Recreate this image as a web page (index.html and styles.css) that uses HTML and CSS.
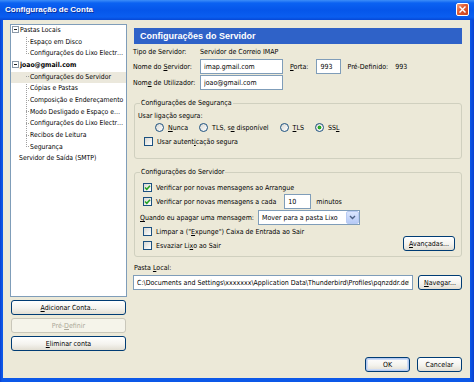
FILE: index.html
```html
<!DOCTYPE html>
<html lang="pt">
<head>
    <meta charset="UTF-8">
    <title>Configuração de Conta</title>
    <link rel="stylesheet" href="styles.css">
</head>
<body>

<div class="window">
    <div class="titlebar">
        <span class="title">Configuração de Conta</span>
        <span class="close-btn">
            <svg width="7" height="7" viewBox="0 0 7 7"><path d="M1 1L6 6M6 1L1 6" stroke="#fff" stroke-width="1.4" stroke-linecap="square"/></svg>
        </span>
    </div>

    <div class="client">
        <!-- arvore de contas -->
        <div class="sidebar">
            <div class="tree">
                <div class="tree-row parent"><span class="twisty"></span>Pastas Locais</div>
                <div class="children">
                    <div class="tree-row child">Espaço em Disco</div>
                    <div class="tree-row child">Configurações do Lixo Electrónico</div>
                </div>
                <div class="tree-row parent account"><span class="twisty"></span>joao@gmail.com</div>
                <div class="children">
                    <div class="tree-row child selected">Configurações do Servidor</div>
                    <div class="tree-row child">Cópias e Pastas</div>
                    <div class="tree-row child">Composição e Endereçamento</div>
                    <div class="tree-row child">Modo Desligado e Espaço em Disco</div>
                    <div class="tree-row child">Configurações do Lixo Electrónico</div>
                    <div class="tree-row child">Recibos de Leitura</div>
                    <div class="tree-row child">Segurança</div>
                </div>
                <div class="tree-row top">Servidor de Saída (SMTP)</div>
            </div>
            <div class="side-buttons">
                <button class="btn"><u>A</u>dicionar Conta...</button>
                <button class="btn" disabled>Pré-<u>D</u>efinir</button>
                <button class="btn"><u>E</u>liminar conta</button>
            </div>
        </div>

        <!-- pagina de configuracao -->
        <div class="main">
            <div class="page-header">Configurações do Servidor</div>

            <div class="info-grid">
                <span class="cell">Tipo de Servidor:</span>
                <span class="cell">Servidor de Correio IMAP</span>

                <label class="cell"><span>Nome do <u>S</u>ervidor:</span></label>
                <div class="cell">
                    <input class="textbox server-box" value="imap.gmail.com">
                    <label class="port-label"><u>P</u>orta:</label>
                    <input class="textbox port-box" value="993">
                    <span class="default-label">Pré-Definido:</span>
                    <span>993</span>
                </div>

                <label class="cell"><span>Nom<u>e</u> de Utilizador:</span></label>
                <div class="cell">
                    <input class="textbox server-box" value="joao@gmail.com">
                </div>
            </div>

            <fieldset class="group security">
                <legend>Configurações de Segurança</legend>
                <div class="line">Usar ligação segura:</div>
                <div class="radios">
                    <span class="opt"><span class="radio"></span><span><u>N</u>unca</span></span>
                    <span class="opt"><span class="radio"></span><span>TLS, s<u>e</u> disponível</span></span>
                    <span class="opt"><span class="radio"></span><span><u>T</u>LS</span></span>
                    <span class="opt"><span class="radio on"></span><span>SS<u>L</u></span></span>
                </div>
                <div class="opt check-line"><span class="check"></span><span>Usar autent<u>i</u>cação segura</span></div>
            </fieldset>

            <fieldset class="group server">
                <legend>Configurações do Servidor</legend>
                <div class="opt check-line first">
                    <span class="check on"><svg width="7" height="7" viewBox="0 0 7 7"><path d="M1 3.5L2.8 5.3L6 1.8" fill="none" stroke="#21a121" stroke-width="1.5"/></svg></span>
                    <span>Verificar por novas mensagens ao Arrangue</span>
                </div>
                <div class="opt check-line tall">
                    <span class="check on"><svg width="7" height="7" viewBox="0 0 7 7"><path d="M1 3.5L2.8 5.3L6 1.8" fill="none" stroke="#21a121" stroke-width="1.5"/></svg></span>
                    <span>Verificar por novas mensagens a cada</span>
                    <input class="textbox minutes-box" value="10">
                    <span class="minutes">minutos</span>
                </div>
                <div class="delete-line">
                    <label><u>Q</u>uando eu apagar uma mensagem:</label>
                    <div class="menulist">
                        <span class="value">Mover para a pasta Lixo</span>
                        <span class="drop"><svg width="7" height="5" viewBox="0 0 7 5"><path d="M1 1L3.5 3.5L6 1" fill="none" stroke="#4d6185" stroke-width="1.4"/></svg></span>
                    </div>
                </div>
                <div class="bottom-block">
                    <div class="checks">
                        <div class="opt check-line"><span class="check"></span><span>Limpar a ("<u>E</u>xpunge") Caixa de Entrada ao Sair</span></div>
                        <div class="opt check-line"><span class="check"></span><span>Esvaziar Li<u>x</u>o ao Sair</span></div>
                    </div>
                    <button class="btn advanced"><u>A</u>vançadas...</button>
                </div>
            </fieldset>

            <div class="local-label">Pasta <u>L</u>ocal:</div>
            <div class="local-line">
                <input class="textbox local-box" value="C:\Documents and Settings\xxxxxxx\Application Data\Thunderbird\Profiles\pqnzddr.default\Mail\Local Folders">
                <button class="btn browse"><u>N</u>avegar...</button>
            </div>

            <div class="dialog-buttons">
                <button class="btn default">OK</button>
                <button class="btn">Cancelar</button>
            </div>
        </div>
    </div>
</div>

</body>
</html>
```

FILE: styles.css
```css
* {
    box-sizing: border-box;
}
body {
    margin: 0;
    background: #fff;
}
.window {
    width: 474px;
    height: 382px;
    display: flex;
    flex-direction: column;
    background: linear-gradient(to right, #0a3fd0 0, #0c58e8 2px, #0c58e8 470px, #0a3fd0 474px);
    font-family: "DejaVu Sans Condensed", "Liberation Sans", sans-serif;
    font-size: 7px;
    line-height: 10px;
    color: #000;
}
.titlebar {
    height: 20px;
    display: flex;
    align-items: center;
    padding: 0 5px 0 5px;
    background: linear-gradient(to bottom, #3d8ef8 0%, #0b62f2 15%, #0556ea 50%, #0a5ef0 85%, #0648d6 100%);
}
.title {
    flex: 1;
    color: #fff;
    font-family: "Liberation Sans", sans-serif;
    font-size: 8px;
    font-weight: bold;
    text-shadow: 1px 1px 0 #0c2f9a;
}
.close-btn {
    width: 13px;
    height: 13px;
    border: 1px solid #fff;
    border-radius: 2px;
    background: linear-gradient(135deg, #f3a283 0%, #e35d34 40%, #c8401a 100%);
    display: flex;
    align-items: center;
    justify-content: center;
    margin-top: -1px;
}
.client {
    flex: 1;
    margin: 0 4px 4px 3px;
    background: #ece9d8;
    display: flex;
    gap: 6px;
    padding: 4px 8px 6px 7px;
}

/* arvore */
.sidebar {
    width: 117px;
    display: flex;
    flex-direction: column;
}
.tree {
    height: 273px;
    border: 1px solid #7f9db9;
    background: #fff;
    overflow: hidden;
    font-size: 6.8px;
}
.tree-row {
    height: 11.67px;
    line-height: 11.67px;
    white-space: nowrap;
    overflow: hidden;
    text-overflow: ellipsis;
}
.tree-row.parent {
    padding-left: 1px;
}
.tree-row.account {
    font-weight: bold;
}
.tree-row.top {
    padding-left: 8px;
}
.twisty {
    display: inline-block;
    width: 7px;
    height: 7px;
    margin-right: 1px;
    vertical-align: -1px;
    border: 1px solid #8c9aa8;
    background: linear-gradient(#222, #222) center / 3px 1px no-repeat, #fff;
}
.children {
    background-image: repeating-linear-gradient(to bottom, #a0a0a0 0 1px, transparent 1px 2px);
    background-size: 1px calc(100% - 6px);
    background-position: 15px 0;
    background-repeat: no-repeat;
}
.tree-row.child {
    padding-left: 15px;
}
.tree-row.child::before {
    content: '';
    display: inline-block;
    width: 3px;
    vertical-align: middle;
    border-top: 1px dotted #a0a0a0;
    margin-right: 1px;
}
.tree-row.selected {
    background: #ebe8dc;
}
.side-buttons {
    margin-top: 3px;
    padding: 0 1px;
    display: flex;
    flex-direction: column;
    gap: 3px;
}

/* botoes */
.btn {
    height: 15px;
    margin: 0;
    padding: 0;
    border: 1px solid #003c74;
    border-radius: 3px;
    background: linear-gradient(#ffffff, #f4f3ee 55%, #e2ded3);
    font: inherit;
    color: #000;
    line-height: 12px;
}
.btn:disabled {
    border-color: #c9c7ba;
    color: #aca899;
    background: #f5f4ea;
}
.btn.default {
    box-shadow: inset 0 0 0 1px #b3c8ef, inset 0 0 0 2px #cedcf5;
}

/* pagina */
.main {
    flex: 1;
    display: flex;
    flex-direction: column;
    min-width: 0;
}
.page-header {
    margin: 4px 0 0 1px;
    height: 16px;
    line-height: 16px;
    padding-left: 6px;
    background: #2f62c8;
    color: #fff;
    font-family: "Liberation Sans", sans-serif;
    font-size: 9px;
    font-weight: bold;
}
.info-grid {
    margin-top: 2px;
    display: grid;
    grid-template-columns: 67px 1fr;
    grid-template-rows: 12px 15px 15px;
    row-gap: 1px;
}
.cell {
    display: flex;
    align-items: center;
    white-space: nowrap;
}
.textbox {
    height: 15px;
    margin: 0;
    padding: 0 3px;
    border: 1px solid #7f9db9;
    background: #fff;
    font: inherit;
    color: #000;
    outline: none;
}
.server-box {
    width: 83px;
}
.port-label {
    margin-left: 7px;
}
.port-box {
    width: 25px;
    margin-left: 8px;
}
.default-label {
    margin-left: 6px;
    margin-right: 7px;
}

.group {
    margin: 8px 0 0 1px;
    padding: 0 3px 11px;
    border: 1px solid #d0d0bf;
    border-radius: 3px;
    min-width: 0;
}
.group legend {
    margin-left: 2px;
    padding: 0 1px;
    line-height: 10px;
}
.line {
    margin-top: 3px;
    height: 10px;
}
.radios {
    margin-top: 1px;
    height: 11px;
    padding-left: 17px;
    display: flex;
    gap: 11px;
}
.opt {
    display: flex;
    align-items: center;
    white-space: nowrap;
}
.radio {
    width: 9px;
    height: 9px;
    margin-right: 4px;
    border: 1px solid #1c5180;
    border-radius: 50%;
    background: linear-gradient(135deg, #d8d8d2, #ffffff);
}
.radio.on {
    background: radial-gradient(circle, #2fb52f 0, #21a121 1.6px, transparent 2.2px), linear-gradient(135deg, #d8d8d2, #ffffff);
}
.check {
    width: 9px;
    height: 9px;
    margin-right: 4px;
    border: 1px solid #1c5180;
    background: linear-gradient(135deg, #d8d8d2, #ffffff);
    display: flex;
    align-items: center;
    justify-content: center;
}
.check-line {
    height: 11px;
    padding-left: 5px;
}
.security .check-line {
    margin-top: 3px;
    padding-left: 6px;
}
.check-line.first {
    margin-top: 5px;
}
.check-line.tall {
    margin-top: 1px;
    height: 15px;
}
.minutes-box {
    width: 27px;
    margin-left: 8px;
}
.minutes {
    margin-left: 5px;
}
.delete-line {
    margin-top: 1px;
    height: 15px;
    padding-left: 2px;
    display: flex;
    align-items: center;
    white-space: nowrap;
}
.menulist {
    margin-left: 4px;
    width: 102px;
    height: 15px;
    border: 1px solid #7f9db9;
    background: #fff;
    padding-left: 3px;
    display: flex;
    align-items: center;
}
.menulist .value {
    flex: 1;
}
.menulist .drop {
    width: 13px;
    height: 13px;
    border: 1px solid #b9cbf3;
    border-radius: 2px;
    background: linear-gradient(#dbe6fd, #b6caf6);
    display: flex;
    align-items: center;
    justify-content: center;
}
.bottom-block {
    margin-top: 1px;
    display: flex;
    align-items: flex-end;
    justify-content: space-between;
}
.checks {
    display: flex;
    flex-direction: column;
    gap: 3px;
}
.server {
    padding-bottom: 5px;
}
.btn.advanced {
    width: 52px;
    margin-right: 3px;
}

.local-label {
    margin-top: 6px;
    height: 10px;
    padding-left: 1px;
}
.local-line {
    margin-top: 2px;
    display: flex;
    gap: 5px;
}
.local-box {
    width: 280px;
}
.btn.browse {
    width: 44px;
}
.dialog-buttons {
    margin-top: auto;
    display: flex;
    justify-content: flex-end;
    gap: 7px;
}
.dialog-buttons .btn {
    width: 45px;
}
```
